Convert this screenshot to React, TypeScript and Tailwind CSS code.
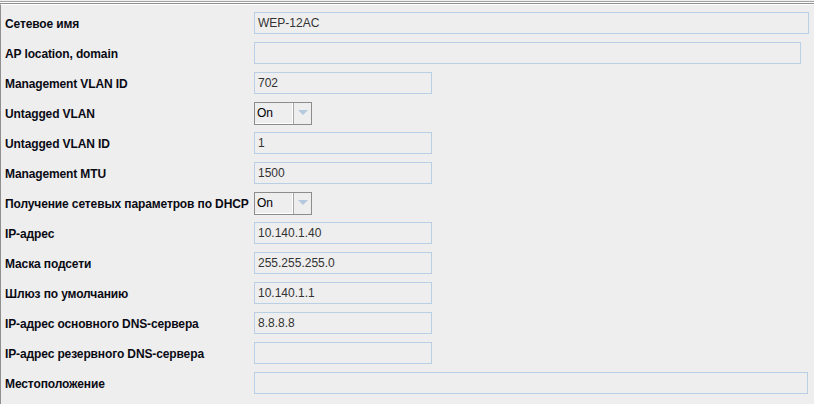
import React from 'react';

type Row = {
  label: string;
  kind: 'text' | 'combo';
  value?: string;
  width?: string;
};

const ROWS: Row[] = [
  { label: 'Сетевое имя', kind: 'text', value: 'WEP-12AC', width: 'w-[555px]' },
  { label: 'AP location, domain', kind: 'text', value: '', width: 'w-[547px]' },
  { label: 'Management VLAN ID', kind: 'text', value: '702', width: 'w-[178px]' },
  { label: 'Untagged VLAN', kind: 'combo', value: 'On' },
  { label: 'Untagged VLAN ID', kind: 'text', value: '1', width: 'w-[178px]' },
  { label: 'Management MTU', kind: 'text', value: '1500', width: 'w-[178px]' },
  { label: 'Получение сетевых параметров по DHCP', kind: 'combo', value: 'On' },
  { label: 'IP-адрес', kind: 'text', value: '10.140.1.40', width: 'w-[178px]' },
  { label: 'Маска подсети', kind: 'text', value: '255.255.255.0', width: 'w-[178px]' },
  { label: 'Шлюз по умолчанию', kind: 'text', value: '10.140.1.1', width: 'w-[178px]' },
  { label: 'IP-адрес основного DNS-сервера', kind: 'text', value: '8.8.8.8', width: 'w-[178px]' },
  { label: 'IP-адрес резервного DNS-сервера', kind: 'text', value: '', width: 'w-[178px]' },
  { label: 'Местоположение', kind: 'text', value: '', width: 'w-[554px]' },
];

function Combo({ value }: { value: string }) {
  return (
    <div className="flex h-[23px] w-[58px] border border-[#8c8c8c] bg-[#eeeeee]">
      <div className="flex w-[38px] items-center border-b border-r border-b-white border-r-white bg-[#eeeeee] pl-[2px] text-[12px] text-black">
        {value}
      </div>
      <div className="flex flex-1 items-center justify-center border-l border-[#a6a6a6]">
        <svg width="10" height="6" viewBox="0 0 10 6">
          <path d="M0 0 L10 0 L5 5 Z" fill="#b4c8de" />
        </svg>
      </div>
    </div>
  );
}

export default function App() {
  return (
    <div
      className="h-[404px] w-[814px] overflow-hidden bg-[#eeeeee]"
      style={{ fontFamily: '"Liberation Sans", Arial, sans-serif' }}
    >
      {/* frame top edge */}
      <div className="h-[1px] bg-[#eeeeee]" />
      <div className="h-[1px] bg-[#a3a3a3]" />
      <div className="h-[1px] bg-white" />
      <div className="h-[1px] bg-[#8f8f8f]" />
      <div className="flex h-[400px] border-l border-[#8f8f8f] border-t border-t-white">
        <div className="flex flex-col gap-[8px] pl-[4px] pt-[7px]">
          {ROWS.map((r) => (
            <div key={r.label} className="flex h-[22px] items-center">
              <div className="w-[249px] pt-[1px] text-[12px] font-bold tracking-[-0.12px] text-[#0a0a14]">{r.label}</div>
              {r.kind === 'combo' ? (
                <Combo value={r.value || ''} />
              ) : (
                <div
                  className={`flex h-[22px] items-center border border-[#b8cfe5] bg-[#eeeeee] pl-[3px] text-[12px] text-[#333333] ${r.width}`}
                >
                  {r.value}
                </div>
              )}
            </div>
          ))}
        </div>
      </div>
    </div>
  );
}
